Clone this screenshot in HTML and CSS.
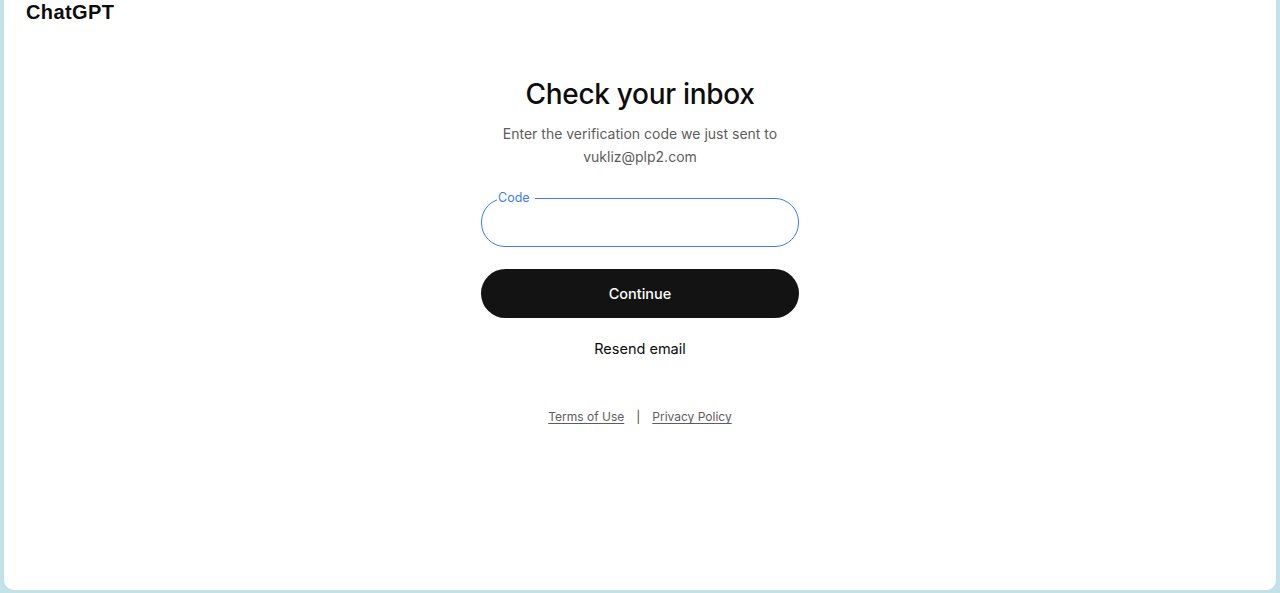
FILE: index.html
```html
<!DOCTYPE html>
<html lang="en">
<head>
<meta charset="utf-8">
<title>Check your inbox - ChatGPT</title>
<link rel="stylesheet" href="styles.css">
</head>
<body>
  <div class="panel">
    <header class="topbar">
      <span class="brand">ChatGPT</span>
    </header>
    <main class="content">
      <section class="card">
        <h1 class="title">Check your inbox</h1>
        <p class="subtitle">Enter the verification code we just sent to<br>vukliz@plp2.com</p>
        <form class="form">
          <fieldset class="field">
            <legend class="field-label">Code</legend>
            <input class="field-input" type="text" aria-label="Code">
          </fieldset>
          <button class="btn-primary" type="button">Continue</button>
          <button class="btn-link" type="button">Resend email</button>
        </form>
        <nav class="legal">
          <a href="#" class="legal-link">Terms of Use</a>
          <span class="legal-sep">|</span>
          <a href="#" class="legal-link">Privacy Policy</a>
        </nav>
      </section>
    </main>
  </div>
</body>
</html>
```
FILE: styles.css
```css
* {
  box-sizing: border-box;
}

html, body {
  margin: 0;
  height: 100%;
}

body {
  background: #c2e2e8;
  font-family: Inter, "Noto Sans", "Liberation Sans", sans-serif;
  color: #0d0d0d;
  padding: 0 4px 3px 4px;
}

.panel {
  background: #ffffff;
  height: 590px;
  border-radius: 0 0 10px 10px;
  display: flex;
  flex-direction: column;
}

.topbar {
  padding: 0 22px;
  height: 40px;
}

.brand {
  font-family: "Liberation Sans", Arial, sans-serif;
  font-size: 20px;
  font-weight: 700;
  line-height: 24px;
  letter-spacing: 0.4px;
  color: #0d0d0d;
}

.content {
  display: flex;
  justify-content: center;
}

.card {
  width: 318px;
  display: flex;
  flex-direction: column;
  align-items: center;
}

.title {
  margin: 36px 0 0;
  font-size: 28px;
  font-weight: 500;
  line-height: 36px;
  letter-spacing: -0.3px;
  white-space: nowrap;
}

.subtitle {
  margin: 10px 0 0;
  font-size: 14px;
  line-height: 23px;
  color: #5d5d5d;
  text-align: center;
  white-space: nowrap;
}

.form {
  width: 100%;
  display: flex;
  flex-direction: column;
  align-items: stretch;
  margin-top: 23px;
}

.field {
  margin: 0;
  padding: 0 16px;
  height: 56px;
  border: 1px solid #3b7df0;
  border-radius: 24px;
}

.field-label {
  padding: 0 5px 0 1px;
  margin-left: -1px;
  font-size: 12.5px;
  line-height: 14px;
  color: #3b7df0;
}

.field-input {
  border: none;
  outline: none;
  width: 100%;
  height: 34px;
  font: inherit;
  font-size: 16px;
  background: transparent;
}

.btn-primary {
  margin-top: 22px;
  height: 49px;
  border: none;
  border-radius: 25px;
  background: #131313;
  color: #ffffff;
  font-family: inherit;
  font-size: 14.5px;
  font-weight: 500;
}

.btn-link {
  margin-top: 18px;
  align-self: center;
  border: none;
  background: none;
  font-family: inherit;
  font-size: 14.5px;
  color: #0d0d0d;
  padding: 4px 0;
}

.legal {
  margin-top: 48px;
  display: flex;
  gap: 12px;
  align-items: center;
  font-size: 12px;
  color: #5d5d5d;
}

.legal-link {
  color: #5d5d5d;
  text-decoration: underline;
  text-underline-offset: 2px;
}

.legal-sep {
  color: #444444;
}
```
